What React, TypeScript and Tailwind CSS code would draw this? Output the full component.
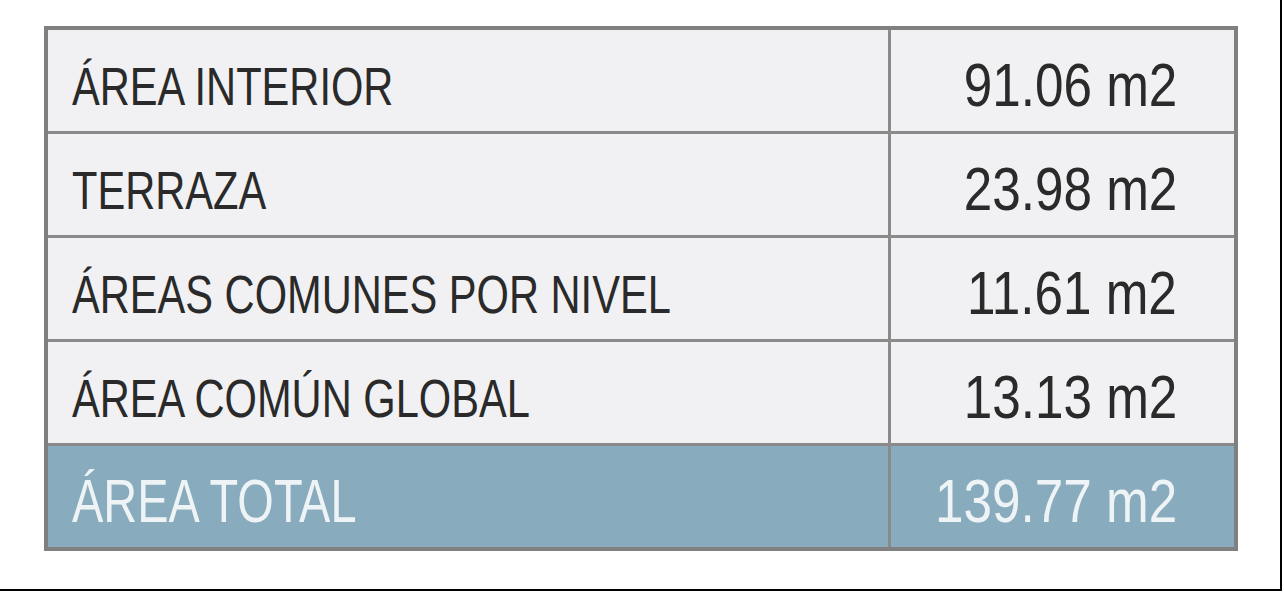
import React from 'react';

interface Row {
    label: string;
    value: string;
}

const rows: Row[] = [
    { label: 'ÁREA INTERIOR', value: '91.06 m2' },
    { label: 'TERRAZA', value: '23.98 m2' },
    { label: 'ÁREAS COMUNES POR NIVEL', value: '11.61 m2' },
    { label: 'ÁREA COMÚN GLOBAL', value: '13.13 m2' },
];

const font = { fontFamily: '"Liberation Sans", Arial, sans-serif' };

const App: React.FC = () => {
    return (
        <div className="w-[1282px] h-[591px] bg-white border-r-2 border-b-2 border-black pt-[26px] pl-[44px]" style={font}>
            <div className="w-[1194px] border-4 border-[#808080] bg-[#8a8a8a] grid grid-cols-[840px_343px] gap-[3px]">
                {rows.map((row) => (
                    <React.Fragment key={row.label}>
                        <div className="h-[101px] bg-[#f1f1f3] flex items-center pl-[24px] pt-[12px] text-[53px] text-[#2a2a2a] leading-none whitespace-nowrap">
                            <span className="inline-block origin-left scale-x-[0.785]">{row.label}</span>
                        </div>
                        <div className="h-[101px] bg-[#f1f1f3] flex items-center justify-end pr-[57px] pt-[9px] text-[61px] text-[#2a2a2a] leading-none whitespace-nowrap">
                            <span className="inline-block origin-right scale-x-[0.84]">{row.value}</span>
                        </div>
                    </React.Fragment>
                ))}
                {/* Total row */}
                <div className="h-[101px] bg-[#88abbd] flex items-center pl-[24px] pt-[9px] text-[61px] text-[#eef3f6] leading-none whitespace-nowrap">
                    <span className="inline-block origin-left scale-x-[0.77]">ÁREA TOTAL</span>
                </div>
                <div className="h-[101px] bg-[#88abbd] flex items-center justify-end pr-[57px] pt-[9px] text-[61px] text-[#eef3f6] leading-none whitespace-nowrap">
                    <span className="inline-block origin-right scale-x-[0.84]">139.77 m2</span>
                </div>
            </div>
        </div>
    );
};

export default App;
